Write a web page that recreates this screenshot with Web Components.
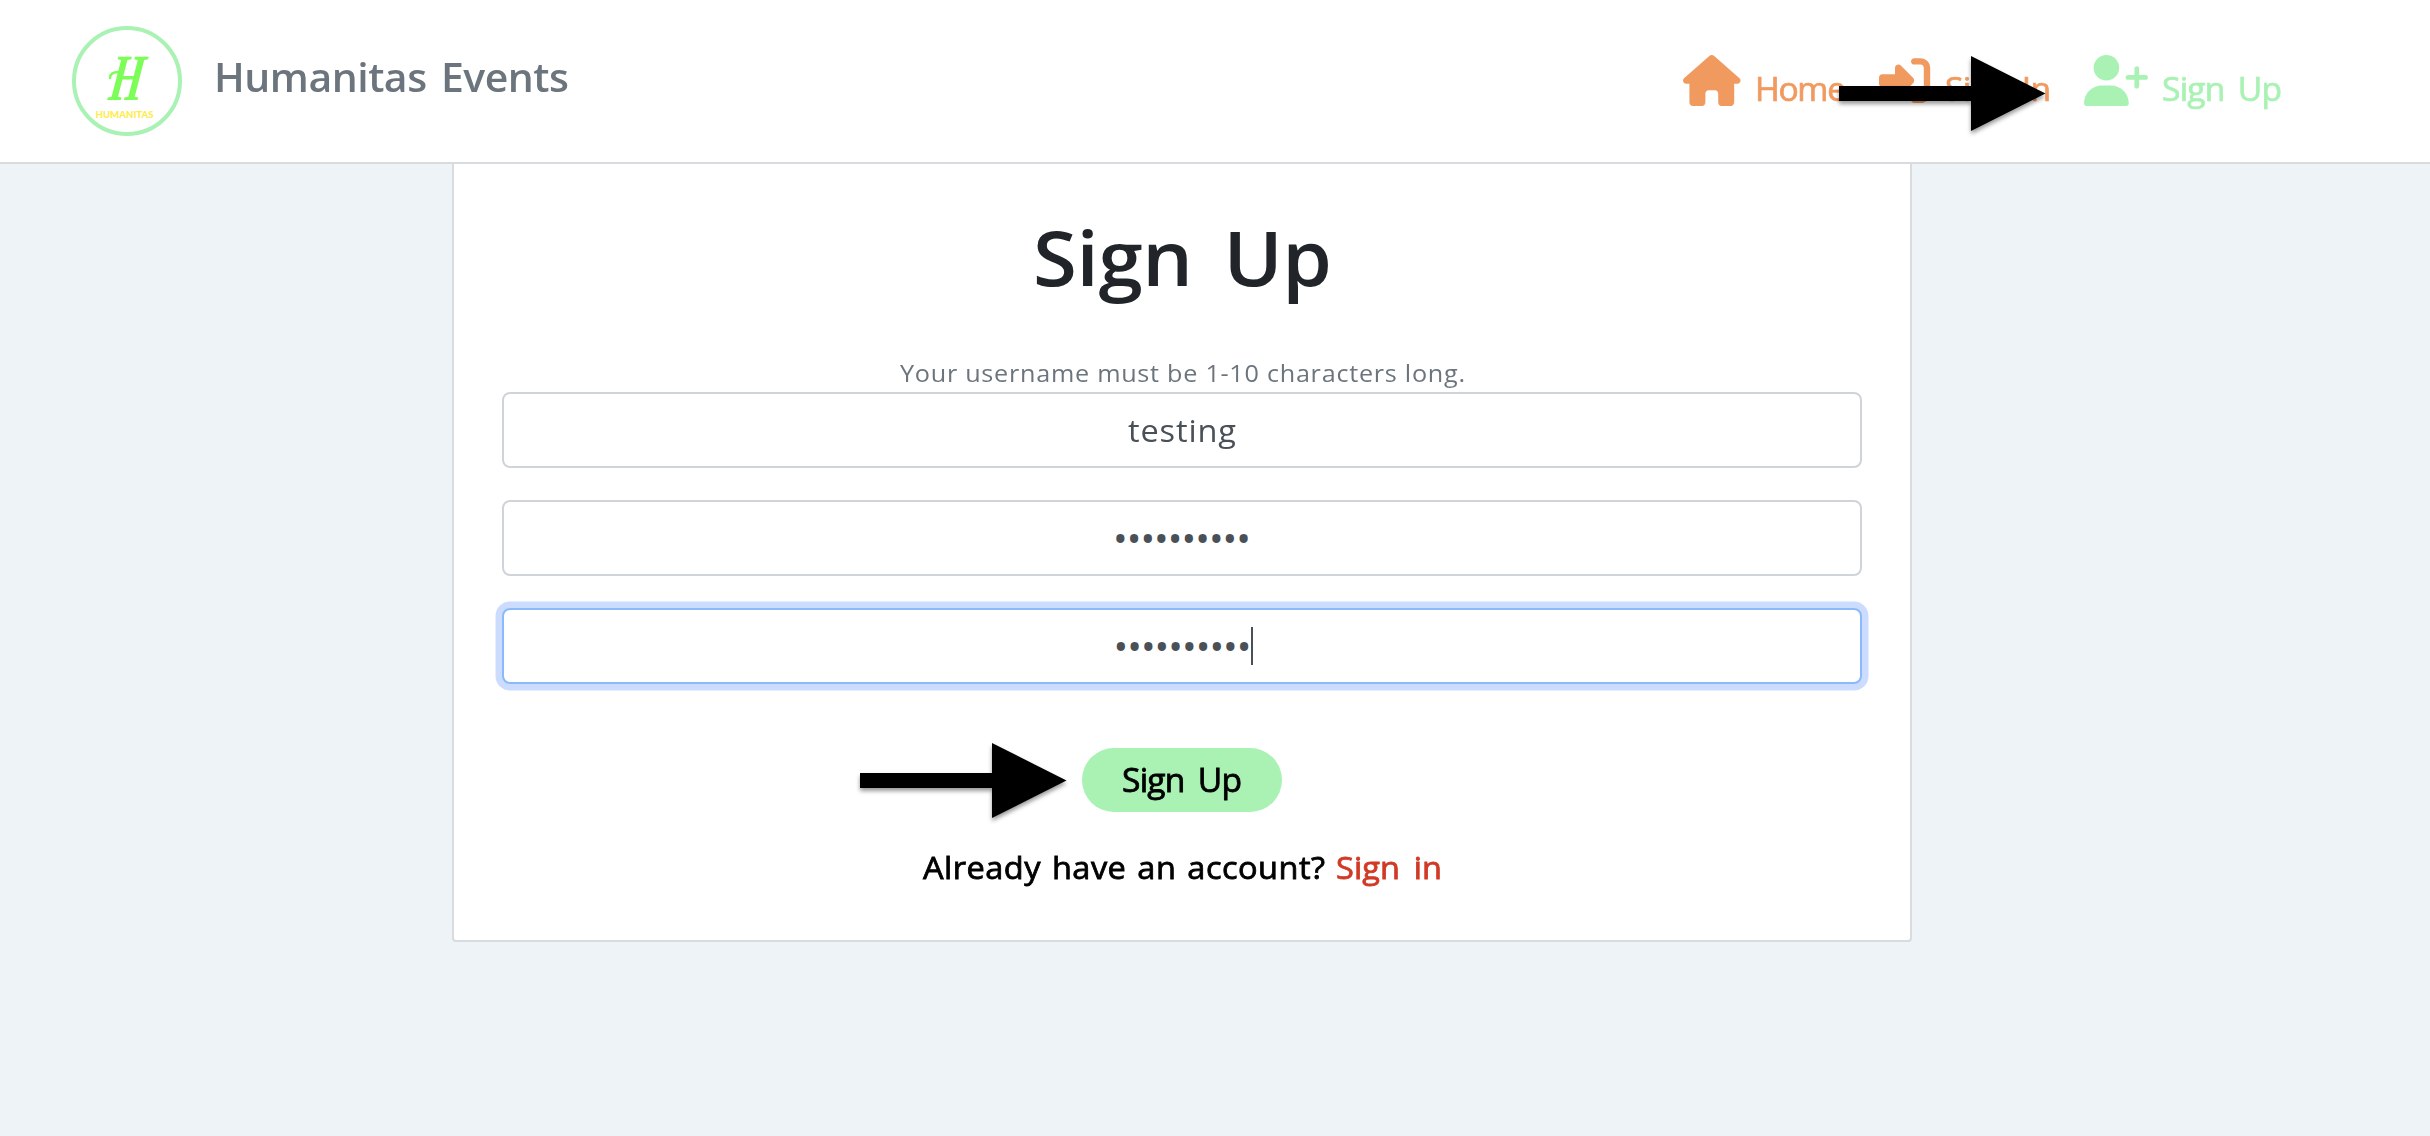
<!DOCTYPE html>
<html lang="en">
<head>
<meta charset="utf-8">
<title>Humanitas Events</title>
<style>
html,body{margin:0;height:100%}
body{background:#edf3f7;font-family:"Open Sans","Noto Sans",sans-serif;overflow:hidden}
</style>
</head>
<body>
<events-app></events-app>
<script>
const define = (name, html, setup) => customElements.define(name, class extends HTMLElement {
  connectedCallback() {
    if (this.shadowRoot) return;
    const t = document.createElement('template');
    t.innerHTML = html;
    this.attachShadow({mode: 'open'}).append(t.content.cloneNode(true));
    if (setup) setup(this, this.shadowRoot);
  }
});

/* One line of text, slightly widened and tracked out to an exact width */
define('tracked-text', `
<style>
:host{display:block;flex:none;white-space:nowrap;text-align:left}
span{display:inline-block;white-space:pre;transform-origin:0 50%}
</style><span></span>`, (el, root) => {
  const s = root.querySelector('span');
  const stretch = +(el.getAttribute('stretch') || 1.05);
  s.textContent = el.getAttribute('text');
  s.style.wordSpacing = (el.getAttribute('gap') || 0) + 'px';
  const target = +el.getAttribute('fit');
  const spacing = (target / stretch - s.getBoundingClientRect().width) / (s.textContent.length - 1);
  s.style.letterSpacing = spacing + 'px';
  s.style.marginRight = -spacing + 'px';
  s.style.transform = `scaleX(${stretch})`;
  el.style.width = target + 'px';
});

define('brand-logo', `
<style>
:host{display:block;box-sizing:border-box;flex:none;width:110px;height:110px;border:4px solid #a9f2b4;border-radius:50%;background:#fff}
svg{display:block;width:102px;height:102px}
</style>
<svg viewBox="76 30 102 102">
<text x="0" y="0" transform="translate(107.500 100) skewX(-8)" font-family="Liberation Serif" font-style="italic" font-weight="700" font-size="66" textLength="34" lengthAdjust="spacingAndGlyphs" fill="#7dfd57">H</text>
<path d="M110 78q0-6 9-6" fill="none" stroke="#7dfd57" stroke-width="2.4" stroke-linecap="round"/>
<text x="95.5" y="118.4" font-family="Lato" font-weight="900" font-size="9.8" textLength="58" lengthAdjust="spacingAndGlyphs" fill="#ffec4a">HUMANITAS</text>
</svg>`);

const icons = {
  house: ['0 0 576 512', 'M575.8 255.5c0 18-15 32.100-32 32.100l-32 0 .7 160.200c0 2.700-.2 5.400-.5 8.100l0 16.200c0 22.100-17.900 40-40 40l-16 0c-1.100 0-2.200 0-3.300-.1c-1.400 .1-2.800 .1-4.200 .1L416 512l-24 0c-22.100 0-40-17.900-40-40l0-24 0-64c0-17.700-14.300-32-32-32l-64 0c-17.700 0-32 14.300-32 32l0 64 0 24c0 22.100-17.900 40-40 40l-24 0-31.900 0c-1.500 0-3-.1-4.500-.2c-1.200 .1-2.400 .2-3.600 .2l-16 0c-22.100 0-40-17.900-40-40l0-112c0-.9 0-1.900 .1-2.800l0-69.600L32 287.600c-18 0-32-14-32-32.100c0-9 3-17 10-24L266.400 8c7-7 15-8 22-8s15 2 21 7L564.800 231.500c8 7 12 15 11 24z'],
  enter: ['0 0 512 512', 'M217.900 105.900L340.700 228.700c7.200 7.200 11.300 17.100 11.300 27.300s-4.100 20.100-11.300 27.300L217.900 406.100c-6.400 6.400-15 9.900-24 9.900c-18.700 0-33.900-15.200-33.900-33.900l0-62.100L32 320c-17.700 0-32-14.300-32-32l0-64c0-17.700 14.300-32 32-32l128 0 0-62.100c0-18.700 15.200-33.900 33.900-33.900c9 0 17.600 3.600 24 9.900zM352 416l64 0c17.700 0 32-14.300 32-32l0-256c0-17.700-14.300-32-32-32l-64 0c-17.700 0-32-14.300-32-32s14.300-32 32-32l64 0c53 0 96 43 96 96l0 256c0 53-43 96-96 96l-64 0c-17.700 0-32-14.300-32-32s14.300-32 32-32z'],
  join: ['0 0 640 512', 'M96 128a128 128 0 1 1 256 0A128 128 0 1 1 96 128zM0 482.300C0 383.800 79.800 304 178.300 304l91.400 0C368.200 304 448 383.800 448 482.300c0 16.400-13.300 29.700-29.700 29.700L29.700 512C13.300 512 0 498.700 0 482.300zM504 312l0-64-64 0c-13.300 0-24-10.700-24-24s10.700-24 24-24l64 0 0-64c0-13.300 10.700-24 24-24s24 10.700 24 24l0 64 64 0c13.300 0 24 10.700 24 24s-10.700 24-24 24l-64 0 0 64c0 13.300-10.700 24-24 24s-24-10.700-24-24z']
};

define('nav-item', `
<style>
:host{display:flex;align-items:flex-start;flex:none;gap:14px;font-size:32px;line-height:40px;-webkit-text-stroke:.7px currentColor}
svg{display:block;flex:none;height:51.2px;fill:currentColor}
tracked-text{margin-top:14.1px}
</style><svg><path/></svg>`, (el, root) => {
  const [box, d] = icons[el.getAttribute('icon')];
  const svg = root.querySelector('svg');
  svg.setAttribute('viewBox', box);
  svg.style.width = box.split(' ')[2] / 10 + 'px';
  svg.firstChild.setAttribute('d', d);
  const t = document.createElement('tracked-text');
  for (const a of ['text', 'fit', 'gap']) if (el.hasAttribute(a)) t.setAttribute(a, el.getAttribute(a));
  root.append(t);
});

define('site-header', `
<style>
:host{display:flex;box-sizing:border-box;height:164px;border-bottom:2px solid #d9dbde;background:#fff;padding:26px 148px 0 72px;justify-content:space-between;align-items:flex-start}
.brand{display:flex;gap:31.500px}
.brand tracked-text{font-size:39px;line-height:50px;font-weight:600;color:#6c757d;margin-top:26px}
nav{display:flex;align-items:flex-start;margin-top:29.2px;color:#f19a60}
nav-item+nav-item{margin-left:33.500px}
.on{color:#a9f2b4}
</style>
<div class="brand"><brand-logo></brand-logo><tracked-text text="Humanitas Events" fit="355" gap="4"></tracked-text></div>
<nav>
<nav-item icon="house" text="Home" fit="91"></nav-item>
<nav-item icon="enter" text="Sign In" fit="106" gap="5"></nav-item>
<nav-item class="on" icon="join" text="Sign Up" fit="120" gap="5"></nav-item>
</nav>`);

define('form-field', `
<style>
:host{display:flex;box-sizing:border-box;height:76px;border:2px solid #ced4da;border-radius:8px;background:#fff;justify-content:center;align-items:center;color:#495057;font-size:31px;line-height:40px}
:host([focused]){border-color:#8bbafc;box-shadow:0 0 0 6.500px #ccdcff}
:host([secret]){font-size:39px}
:host([secret]) ::slotted(tracked-text){margin-top:-1px}
</style><slot></slot>`);

define('text-caret', `
<style>
:host{display:block;flex:none;width:2px;height:38px;background:#495057;margin:0 -2px 0 -1px}
</style>`);

define('pointer-arrow', `
<style>
:host{display:block;position:absolute;width:207px;height:75px;filter:drop-shadow(0 3px 2px rgba(0,0,0,.4))}
svg{display:block;overflow:visible}
</style>
<svg width="207" height="75" viewBox="0 0 207 75"><path d="M0 30H132V0L206.500 37.500 132 75V45H0z"/></svg>`);

define('signup-card', `
<style>
:host{display:flex;flex-direction:column;box-sizing:border-box;width:1460px;height:778px;border:2px solid #d9dbde;border-top:0;border-radius:0 0 4px 4px;background:#fff;padding:42px 48px 0;align-items:stretch}
h1{display:flex;justify-content:center;margin:0;font-size:76px;line-height:102px;font-weight:600;color:#212529}
.help{display:flex;justify-content:center;margin:50px 0 4px;font-size:24px;line-height:30px;color:#6c757d}
form-field+form-field{margin-top:32px}
button{align-self:center;display:flex;justify-content:center;align-items:center;margin:64px 0 0;width:200px;height:64px;border:0;border-radius:32px;background:#a9f2b4;color:#000;font:400 32px/40px "Open Sans","Noto Sans",sans-serif;-webkit-text-stroke:.8px #000;padding:0}
.foot{display:flex;justify-content:center;gap:11px;margin:35px 0 0;font-size:31px;line-height:40px;color:#000;-webkit-text-stroke:.8px currentColor}
.foot .link{color:#d13a25;-webkit-text-stroke-color:#d13a25}
</style>
<h1><tracked-text text="Sign Up" fit="299" gap="10"></tracked-text></h1>
<div class="help"><tracked-text text="Your username must be 1-10 characters long." fit="565"></tracked-text></div>
<form-field><tracked-text text="testing" fit="108"></tracked-text></form-field>
<form-field secret><tracked-text stretch="1" text="••••••••••" fit="138"></tracked-text></form-field>
<form-field secret focused><tracked-text stretch="1" text="••••••••••" fit="138"></tracked-text><text-caret></text-caret></form-field>
<button type="button"><tracked-text text="Sign Up" fit="120" gap="5"></tracked-text></button>
<div class="foot"><tracked-text text="Already have an account?" fit="402" gap="2"></tracked-text><tracked-text class="link" text="Sign in" fit="106" gap="5"></tracked-text></div>`);

define('events-app', `
<style>
:host{display:block;position:relative;height:1136px;background:#edf3f7}
main{display:flex;padding-left:452px}
.top{left:1839px;top:56px}
.form{left:860px;top:743px}
</style>
<site-header></site-header>
<main><signup-card></signup-card></main>
<pointer-arrow class="top"></pointer-arrow>
<pointer-arrow class="form"></pointer-arrow>`);
</script>
</body>
</html>
